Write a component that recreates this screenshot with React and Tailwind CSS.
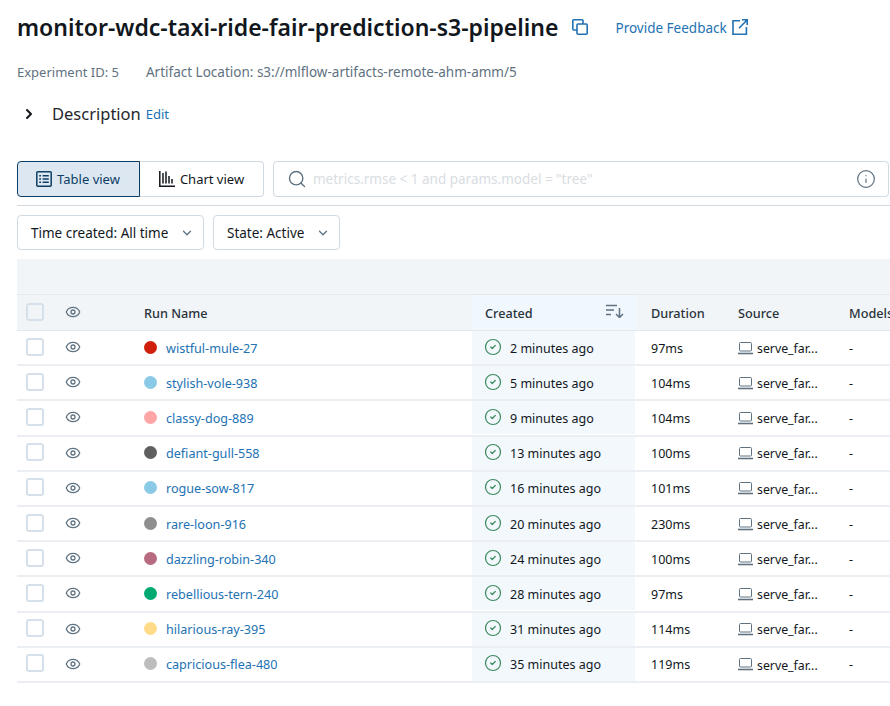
import { ChevronRight, ChevronDown, Search, Info, Eye, CircleCheck } from "lucide-react";

const runs = [
  { name: "wistful-mule-27", color: "bg-[#d0200c]", created: "2 minutes ago", duration: "97ms" },
  { name: "stylish-vole-938", color: "bg-[#8bcae7]", created: "5 minutes ago", duration: "104ms" },
  { name: "classy-dog-889", color: "bg-[#ffa5a5]", created: "9 minutes ago", duration: "104ms" },
  { name: "defiant-gull-558", color: "bg-[#5f5f5f]", created: "13 minutes ago", duration: "100ms" },
  { name: "rogue-sow-817", color: "bg-[#8bcae7]", created: "16 minutes ago", duration: "101ms" },
  { name: "rare-loon-916", color: "bg-[#8e8e8e]", created: "20 minutes ago", duration: "230ms" },
  { name: "dazzling-robin-340", color: "bg-[#b86a80]", created: "24 minutes ago", duration: "100ms" },
  { name: "rebellious-tern-240", color: "bg-[#00a972]", created: "28 minutes ago", duration: "97ms" },
  { name: "hilarious-ray-395", color: "bg-[#ffdb8a]", created: "31 minutes ago", duration: "114ms" },
  { name: "capricious-flea-480", color: "bg-[#bdbdbd]", created: "35 minutes ago", duration: "119ms" },
];

// icons that lucide doesn't have in the same shape
function CopyIcon() {
  return (
    <svg width="16" height="16" viewBox="0 0 16 16" fill="none" stroke="#2272b4" strokeWidth="1.6" className="ml-[14px] shrink-0">
      <path d="M5 11H1.8a1 1 0 0 1-1-1V1.8a1 1 0 0 1 1-1H10a1 1 0 0 1 1 1V5" />
      <rect x="5" y="5" width="10.2" height="10.2" rx="1" />
    </svg>
  );
}

function LinkIcon() {
  return (
    <svg width="16" height="16" viewBox="0 0 16 16" fill="none" stroke="#2272b4" strokeWidth="1.6" className="ml-[5px] shrink-0">
      <path d="M8 1.8H1v13.4h13.4V8" />
      <path d="M7 9.2 15 1M10 .8h5.2V6" />
    </svg>
  );
}

function TableIcon() {
  return (
    <svg width="16" height="16" viewBox="0 0 16 16" fill="none" stroke="#0e3e64" strokeWidth="1.5" className="shrink-0 -ml-[1px]">
      <rect x=".8" y=".8" width="14.4" height="14.4" rx="1" />
      <path d="M3.2 4.8h1.8M3.2 8h1.8M3.2 11.2h1.8M6.6 4.8h6.2M6.6 8h6.2M6.6 11.2h6.2" />
    </svg>
  );
}

function ChartIcon() {
  return (
    <svg width="16" height="16" viewBox="0 0 16 16" fill="none" stroke="#11171c" strokeWidth="1.5" className="shrink-0">
      <path d="M.8 0v15.2H16M4 2v10.5M7 0.5v12M10 5v7.5M13 8v4.5" />
    </svg>
  );
}

function SortIcon() {
  return (
    <svg width="18" height="14" viewBox="0 0 18 14" fill="none" stroke="#5f7281" strokeWidth="1.5" className="shrink-0 mb-[3px]">
      <path d="M0 1.5h11M0 6h8M0 10.5h5M13.5 4v9.5M10 10l3.5 3.5L17 10" />
    </svg>
  );
}

function LaptopIcon() {
  return (
    <svg width="15" height="14" viewBox="0 0 15 14" fill="none" className="shrink-0">
      <rect x="1.5" y="1.5" width="12" height="8.5" rx="1" stroke="#5f7281" strokeWidth="1" />
      <path d="M0 12.5h15" stroke="#5f7281" strokeWidth="1.6" />
    </svg>
  );
}

function EyeCell() {
  return (
    <div className="w-[72px] shrink-0 pl-[1px]">
      <Eye size={16} strokeWidth={1.9} className="text-[#5f7281] mb-[1px]" />
    </div>
  );
}

function Checkbox({ filled }) {
  return (
    <div className="w-[47px] shrink-0 pl-[9px] pb-[2px]">
      <div className={`w-[18px] h-[18px] rounded-[3px] border-2 border-[#d5e0ea] ${filled ? "bg-[#f1f5f8]" : "bg-white"}`} />
    </div>
  );
}

function Row({ run }) {
  return (
    <div className="flex items-center h-[35.2px] border-b-2 border-[#ebeff3] text-[12.5px] text-[#11171c] whitespace-nowrap">
      <Checkbox />
      <EyeCell />
      <div className="w-[8px] shrink-0" />
      <div className="w-[328px] shrink-0 flex items-center">
        <span className={`w-[13px] h-[13px] rounded-full ${run.color} mb-[1px]`} />
        <span className="ml-[9px] pt-[3px] text-[12.6px] text-[#2272b4]">{run.name}</span>
      </div>
      <div className="w-[165px] shrink-0 h-[33px] flex items-center bg-[#f3f8fd] border-r-2 border-white pl-[13px]">
        <CircleCheck size={18} strokeWidth={1.6} className="text-[#3a8a5c] mb-[2px] -ml-[1px]" />
        <span className="ml-[8px] pt-[3px]">{run.created}</span>
      </div>
      <div className="w-[101px] shrink-0 pl-[14px] pt-[3px]">{run.duration}</div>
      <div className="w-[111px] shrink-0 flex items-center">
        <LaptopIcon />
        <span className="ml-[4px] pt-[3px] text-[12.3px]">serve_far...</span>
      </div>
      <div className="pt-[3px]">-</div>
    </div>
  );
}

export default function App() {
  return (
    <div className="w-[890px] h-[706px] overflow-hidden bg-white pl-[17px] font-['Noto_Sans','Open_Sans',sans-serif] text-[#11171c]">
      <div className="w-[900px] flex items-center h-[54px]">
        <h1 className="text-[23px] font-semibold leading-none whitespace-nowrap">
          monitor-wdc-taxi-ride-fair-prediction-s3-pipeline
        </h1>
        <CopyIcon />
        <span className="ml-[27px] pt-[3px] text-[13.5px] text-[#2272b4]">Provide Feedback</span>
        <LinkIcon />
      </div>

      <div className="flex mt-[9px] leading-[18px] text-[#5f7281] whitespace-nowrap">
        <span className="text-[13px]">Experiment ID: 5</span>
        <span className="ml-[27px] text-[13.5px]">Artifact Location: s3://mlflow-artifacts-remote-ahm-amm/5</span>
      </div>

      <div className="flex items-center mt-[21px] h-[24px]">
        <ChevronRight size={16} strokeWidth={3} className="ml-[4px] text-[#11171c]" />
        <span className="ml-[15px] text-[16.5px] text-[#1f272d]">Description</span>
        <span className="ml-[5px] pt-[1px] text-[13px] text-[#2272b4]">Edit</span>
      </div>

      <div className="flex mt-[35px] h-[36px] text-[13px]">
        <div className="w-[123px] flex items-center justify-center bg-[#dce7f2] border border-[#0e3e64] rounded-l-[4px] text-[#0e3e64]">
          <TableIcon />
          <span className="ml-[5px] pt-[1px]">Table view</span>
        </div>
        <div className="w-[124px] flex items-center justify-center border border-l-0 border-[#d1d9e1] rounded-r-[4px]">
          <ChartIcon />
          <span className="ml-[5px] pt-[1px]">Chart view</span>
        </div>
        <div className="w-[616px] ml-[9px] flex items-center border border-[#d1d9e1] rounded-[4px] pl-[13px] pr-[12px]">
          <Search size={20} strokeWidth={1.7} className="text-[#5f7281]" />
          <span className="ml-[6px] pt-[1px] text-[13.5px] text-[#d8dde2] flex-1">metrics.rmse &lt; 1 and params.model = "tree"</span>
          <Info size={20} strokeWidth={1.5} className="text-[#5f7281]" />
        </div>
      </div>

      <div className="h-[1px] bg-[#d1d9e1] mt-[8px]" />

      <div className="flex mt-[9px] h-[35px] text-[13.5px]">
        <div className="w-[187px] flex items-center justify-between border border-[#d1d9e1] rounded-[4px] pl-[13px] pr-[9px]">
          <span className="pt-[1px]">Time created: All time</span>
          <ChevronDown size={14} strokeWidth={2.2} className="text-[#5f7281]" />
        </div>
        <div className="w-[127px] ml-[9px] flex items-center justify-between border border-[#d1d9e1] rounded-[4px] pl-[13px] pr-[9px]">
          <span className="pt-[1px]">State: Active</span>
          <ChevronDown size={14} strokeWidth={2.2} className="text-[#5f7281]" />
        </div>
      </div>

      <div className="mt-[9px] w-[873px] h-[36px] bg-[#f1f5f8] border-b border-[#e4e9ee]" />

      <div className="w-[873px] overflow-hidden">
        <div className="flex items-center h-[36px] bg-[#f1f5f8] border-b border-[#e4e9ee] text-[12.7px] font-medium text-[#2a333a] whitespace-nowrap">
          <Checkbox filled />
          <EyeCell />
          <div className="w-[8px] shrink-0" />
          <div className="w-[328px] shrink-0 pt-[2px]">Run Name</div>
          <div className="w-[165px] shrink-0 h-full flex items-center justify-between bg-[#f0f7fd] pl-[13px] pr-[13px]">
            <span className="pt-[2px]">Created</span>
            <SortIcon />
          </div>
          <div className="w-[101px] shrink-0 pl-[14px] pt-[2px]">Duration</div>
          <div className="w-[111px] shrink-0 pt-[2px]">Source</div>
          <div className="pt-[2px]">Models</div>
        </div>
        {runs.map((run) => (
          <Row key={run.name} run={run} />
        ))}
      </div>
    </div>
  );
}
